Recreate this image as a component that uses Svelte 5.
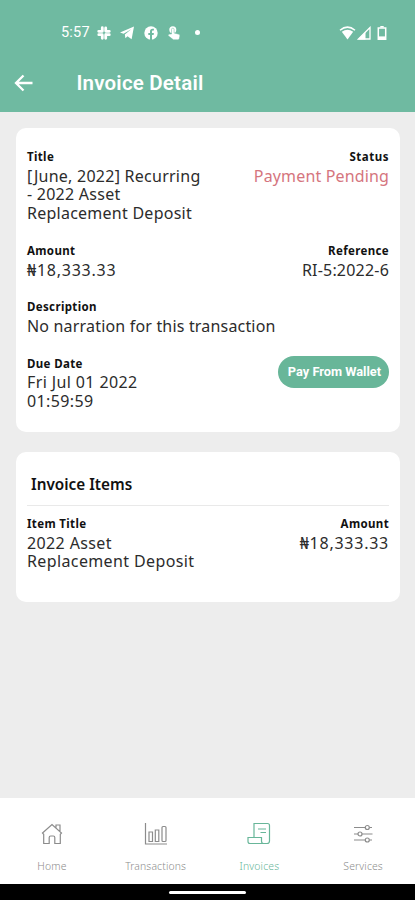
<script lang="ts">
  type Tab = { id: string; label: string };

  const invoice = {
    title: '[June, 2022] Recurring - 2022 Asset Replacement Deposit',
    status: 'Payment Pending',
    amount: '₦18,333.33',
    reference: 'RI-5:2022-6',
    description: 'No narration for this transaction',
    dueDate: 'Fri Jul 01 2022 01:59:59'
  };

  const items = [{ title: '2022 Asset Replacement Deposit', amount: '₦18,333.33' }];

  const tabs: Tab[] = [
    { id: 'home', label: 'Home' },
    { id: 'transactions', label: 'Transactions' },
    { id: 'invoices', label: 'Invoices' },
    { id: 'services', label: 'Services' }
  ];

  let active = $state('invoices');
</script>

<div class="screen">
  <header>
    <div class="statusbar">
      <span class="time">5:57</span>
      <svg class="notif" viewBox="0 0 14 14">
        <g stroke="#fff" stroke-width="2.8" stroke-linecap="round">
          <path d="M5.3 1.7v3.6M1.7 5.3h3.2M8.7 1.9v3.2M8.9 5.3h3.4M1.8 8.7h3.3M5.3 9v3.3M8.7 8.7v3.6M9 8.7h3.3" />
        </g>
      </svg>
      <svg class="notif" viewBox="0 0 14 14">
        <path fill="#fff" d="M0 6.4 14 .6l-2.4 12.6-4.1-3-2.1 2-.6-3.8 6.4-5.1-7.6 4.5z" />
      </svg>
      <svg class="notif" viewBox="0 0 14 14">
        <circle cx="7" cy="7" r="6.7" fill="#fff" />
        <path fill="#6fbaa1" d="M6 14V9H4.3V7H6V5.5c0-1.8 1-2.7 2.6-2.7h1.3v1.8h-.8c-.8 0-1.1.4-1.1 1.1V7h1.9l-.3 2H8v5z" />
      </svg>
      <svg class="notif" viewBox="0 0 14 14">
        <circle cx="5.8" cy="3.7" r="3.5" fill="#fff" />
        <path fill="#fff" stroke="#6fbaa1" stroke-width=".5" d="M4.500 8V3.500q0-1.300 1.300-1.300t1.300 1.300V7l4.700 1.200q1.300.4 1.100 1.700l-.6 2.700q-.3 1.200-1.500 1.200H6.400L1 9.600l1-1.500z" />
      </svg>
      <i class="dot"></i>
      <div class="system">
        <svg width="17" height="14" viewBox="0 0 17 14">
          <path d="M1 4.3Q8.5-2 16 4.3" fill="none" stroke="#fff" stroke-width="1.5" />
          <path d="M2.8 5.7Q8.5 1.6 14.2 5.7L8.5 13.5z" fill="#fff" />
        </svg>
        <svg width="14" height="14" viewBox="0 0 14 14">
          <path d="M1.5 13 13 1.5V13z" fill="none" stroke="#fff" stroke-width="1.3" />
          <path d="M1 13.5 8.5 6v7.5z" fill="#fff" />
        </svg>
        <svg class="battery" width="10" height="14" viewBox="0 0 10 14">
          <path d="M3.3 0h3.4v1.5H3.3z" fill="#fff" />
          <path d="M1.3 2h7.4v11.2H1.3z" fill="none" stroke="#fff" stroke-width="1.5" />
          <path d="M1 10.4h8V13H1z" fill="#fff" />
        </svg>
      </div>
    </div>
    <div class="appbar">
      <svg class="back" width="20" height="18" viewBox="0 0 20 18">
        <path d="M18.5 9H2M9.5 1.5 2 9l7.5 7.5" fill="none" stroke="#fff" stroke-width="2.3" />
      </svg>
      <h1>Invoice Detail</h1>
    </div>
  </header>

  <main>
    <section class="card">
      <div class="row">
        <div class="field wide">
          <b>Title</b>
          <p class="title">{invoice.title}</p>
        </div>
        <div class="field right">
          <b class="status">Status</b>
          <p class="pending">{invoice.status}</p>
        </div>
      </div>
      <div class="row">
        <div class="field">
          <b>Amount</b>
          <p class="money">{invoice.amount}</p>
        </div>
        <div class="field right">
          <b>Reference</b>
          <p class="reference">{invoice.reference}</p>
        </div>
      </div>
      <div class="row">
        <div class="field">
          <b>Description</b>
          <p class="description">{invoice.description}</p>
        </div>
      </div>
      <div class="row">
        <div class="field due">
          <b>Due Date</b>
          <p>{invoice.dueDate}</p>
        </div>
        <button class="pay">Pay From Wallet</button>
      </div>
    </section>

    <section class="card items">
      <h2>Invoice Items</h2>
      {#each items as item}
        <div class="row">
          <div class="field wide">
            <b>Item Title</b>
            <p>{item.title}</p>
          </div>
          <div class="field right">
            <b>Amount</b>
            <p class="money">{item.amount}</p>
          </div>
        </div>
      {/each}
    </section>
  </main>

  <nav>
    {#each tabs as tab}
      <button class="tab" class:active={active === tab.id} onclick={() => (active = tab.id)}>
        <svg width="24" height="24" viewBox="0 0 24 24">
          {#if tab.id === 'home'}
            <path d="M2.5 11 12 2.5l9.5 8.5-1.2 1.3V21.5h-5.500V15.5q0-1.500-1.500-1.500h-2.600q-1.500 0-1.500 1.500v6H3.700v-9.200zM16 5.500V3h4v6" />
          {:else if tab.id === 'transactions'}
            <path d="M1.500 1v21H23M5 10h3.500v9.500H5zM11.300 8h3.500v11.500h-3.500z" />
            <rect x="18" y="4.500" width="4" height="15" rx="1" />
          {:else if tab.id === 'invoices'}
            <path d="M7 15.500V1.500h13.500q2 0 2 2V19q0 2.500-2.500 2.500H3q-2 0-2-2v-4h13.500v3.500q0 2.500 2 2.500M11 7h8M13.500 10.500H19" />
          {:else}
            <path d="M3 5.500h11M18.500 5.500H21M3 12h4M11 12h10.500M3 18h11M18.500 18H21" />
            <circle cx="16.3" cy="5.500" r="2" />
            <circle cx="9" cy="12" r="2" />
            <circle cx="16.3" cy="18" r="2" />
          {/if}
        </svg>
        <span>{tab.label}</span>
      </button>
    {/each}
  </nav>
  <footer><i></i></footer>
</div>

<style>
  :global(body) {
    margin: 0;
  }

  .screen {
    width: 415px;
    height: 900px;
    display: flex;
    flex-direction: column;
    overflow: hidden;
    background: #ededed;
    color: #2c2c2c;
    font-family: 'Noto Sans', 'Open Sans', sans-serif;
  }

  header {
    height: 112px;
    flex: none;
    background: #6fbaa1;
    color: #fff;
    font-family: Roboto, sans-serif;
  }

  .statusbar {
    display: flex;
    align-items: center;
    height: 25px;
    padding: 20px 28px 0 61px;
  }

  .time {
    width: 36px;
    font-size: 14.5px;
    letter-spacing: 0.2px;
  }

  .notif {
    width: 14px;
    height: 14px;
    margin-right: 9.4px;
  }

  .dot {
    width: 5px;
    height: 5px;
    margin-left: 4px;
    border-radius: 50%;
    background: #fff;
  }

  .system {
    display: flex;
    gap: 1px;
    margin-left: auto;
  }

  .battery {
    margin-left: 5px;
  }

  .appbar {
    display: flex;
    align-items: center;
    height: 40px;
    padding: 18px 14px 0;
  }

  .back {
    margin-right: 42.5px;
  }

  h1 {
    margin: 0;
    font-size: 20.5px;
    font-weight: 600;
    letter-spacing: 0.2px;
  }

  main {
    flex: 1;
    padding: 16px 15px 0 16px;
  }

  .card {
    box-sizing: border-box;
    height: 304px;
    padding: 20px 11px 0;
    border-radius: 10px;
    background: #fff;
  }

  .row {
    display: flex;
    justify-content: space-between;
    margin-bottom: 19.4px;
  }

  .field b {
    display: block;
    height: 18.5px;
    font-size: 11.5px;
    font-weight: 700;
    line-height: 18.5px;
    letter-spacing: 0.35px;
    color: #111;
  }

  .field .status {
    letter-spacing: 0.5px;
  }

  .field p {
    margin: 0;
    font-size: 16px;
    line-height: 18.5px;
    letter-spacing: 0.38px;
  }

  .field .title {
    line-height: 18.7px;
    letter-spacing: 0.25px;
  }

  .wide {
    width: 180px;
  }

  .due {
    width: 130px;
  }

  .right {
    text-align: right;
  }

  .field .pending {
    color: #d5757e;
    letter-spacing: 0.15px;
  }

  .field .money {
    letter-spacing: 0.75px;
  }

  .field .reference {
    letter-spacing: 0.2px;
  }

  .field .description {
    letter-spacing: 0.18px;
  }

  .pay {
    width: 111px;
    height: 32px;
    margin-top: 1px;
    padding: 0 0 0 2px;
    border: 0;
    border-radius: 16px;
    background: #68b699;
    color: #fff;
    font: 700 12.8px Roboto, sans-serif;
    white-space: nowrap;
  }

  .items {
    height: 150px;
    margin-top: 20px;
    padding-top: 0;
  }

  h2 {
    height: 54px;
    margin: 0 0 9px;
    padding: 11px 0 0 4px;
    box-sizing: border-box;
    border-bottom: 1px solid #e9e9e9;
    font-size: 15.3px;
    font-weight: 600;
    line-height: 43px;
    color: #111;
  }

  nav {
    display: flex;
    flex: none;
    height: 86px;
    background: #fff;
  }

  .tab {
    display: flex;
    flex: 1;
    flex-direction: column;
    align-items: center;
    gap: 13px;
    padding: 24px 0 0;
    border: 0;
    background: none;
    color: #8c8c8c;
    font: 300 10.4px/14px 'Noto Sans', sans-serif;
    letter-spacing: 0.15px;
  }

  .tab svg {
    fill: none;
    stroke: currentColor;
    stroke-width: 1.2;
  }

  .tab.active {
    color: #68b699;
  }

  footer {
    display: flex;
    flex: none;
    justify-content: center;
    height: 16px;
    background: #000;
  }

  footer i {
    width: 77px;
    height: 3px;
    margin-top: 7px;
    border-radius: 2px;
    background: #fff;
  }
</style>
